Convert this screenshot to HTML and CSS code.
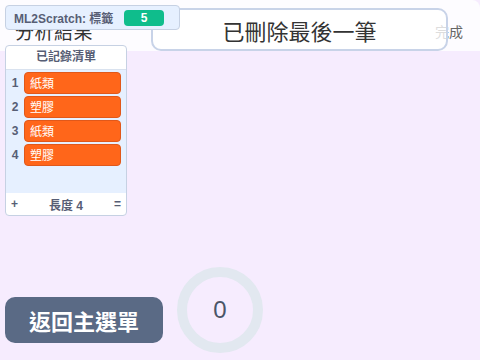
FILE: index.html
```html
<!DOCTYPE html>
<html lang="zh-Hant">
<head>
    <meta charset="UTF-8">
    <title>分析結果</title>
    <link rel="stylesheet" href="styles.css">
</head>
<body>
    <div class="stage">
        <div class="top-band"></div>
        <div class="title">分析結果</div>
        <div class="done">完成</div>
        <div class="message">已刪除最後一筆</div>

        <div class="var-monitor">
            <span class="var-label">ML2Scratch: 標籤</span>
            <span class="var-value">5</span>
        </div>

        <div class="list-monitor">
            <div class="list-header">已記錄清單</div>
            <div class="list-body">
                <div class="list-row"><span class="list-index">1</span><span class="list-item">紙類</span></div>
                <div class="list-row"><span class="list-index">2</span><span class="list-item">塑膠</span></div>
                <div class="list-row"><span class="list-index">3</span><span class="list-item">紙類</span></div>
                <div class="list-row"><span class="list-index">4</span><span class="list-item">塑膠</span></div>
            </div>
            <div class="list-footer">
                <span>+</span>
                <span class="list-length">長度 4</span>
                <span>=</span>
            </div>
        </div>

        <button class="back-btn">返回主選單</button>
        <div class="counter">0</div>
    </div>
</body>
</html>
```

FILE: styles.css
```css
body {
    margin: 0;
    font-family: "Liberation Sans", "Noto Sans CJK TC", sans-serif;
}
.stage {
    position: relative;
    width: 480px;
    height: 360px;
    overflow: hidden;
    background-color: #f6ecfe;
}
.top-band {
    height: 51px;
    background-color: #fdfcff;
    border-top-right-radius: 8px;
}
.title {
    position: absolute;
    left: 15px;
    top: 17px;
    font-size: 19px;
    color: #333;
    letter-spacing: 0.5px;
}
.done {
    position: absolute;
    left: 435px;
    top: 21px;
    font-size: 14px;
    color: #666;
}
.message {
    position: absolute;
    left: 151px;
    top: 8px;
    width: 293px;
    height: 39px;
    border: 2px solid #c8d3e8;
    border-radius: 10px;
    background-color: rgba(255, 255, 255, 0.78);
    display: flex;
    align-items: center;
    justify-content: center;
    font-size: 22px;
    color: #333;
}
.var-monitor {
    position: absolute;
    left: 5px;
    top: 5px;
    width: 165px;
    height: 23px;
    background-color: #e6f0ff;
    border: 1px solid #c6d1e3;
    border-radius: 4px;
    display: flex;
    align-items: center;
    padding-left: 8px;
    box-sizing: content-box;
}
.var-label {
    font-size: 12px;
    font-weight: bold;
    color: #575e75;
    width: 110px;
}
.var-value {
    width: 40px;
    height: 16px;
    line-height: 16px;
    background-color: #0fbd8c;
    color: white;
    border-radius: 4px;
    text-align: center;
    font-size: 12px;
    font-weight: bold;
}
.list-monitor {
    position: absolute;
    left: 5px;
    top: 45px;
    width: 120px;
    height: 169px;
    border: 1px solid #c6d1e3;
    border-radius: 4px;
    background-color: white;
    display: flex;
    flex-direction: column;
    overflow: hidden;
}
.list-header {
    height: 23px;
    line-height: 23px;
    border-bottom: 1px solid #d9e2ef;
    text-align: center;
    font-size: 12px;
    font-weight: bold;
    color: #575e75;
}
.list-body {
    flex: 1;
    background-color: #e6f0ff;
    padding-top: 1px;
}
.list-row {
    display: flex;
    align-items: center;
    height: 24px;
}
.list-index {
    width: 18px;
    text-align: center;
    font-size: 12px;
    font-weight: bold;
    color: #575e75;
}
.list-item {
    width: 97px;
    height: 22px;
    line-height: 22px;
    background-color: #ff661a;
    border: 1px solid #e0581a;
    border-radius: 4px;
    color: white;
    font-size: 12px;
    padding-left: 5px;
    box-sizing: border-box;
}
.list-footer {
    height: 22px;
    display: flex;
    align-items: center;
    justify-content: space-between;
    padding: 0 5px;
    font-size: 12px;
    font-weight: bold;
    color: #575e75;
}
.back-btn {
    position: absolute;
    left: 5px;
    top: 297px;
    width: 158px;
    height: 46px;
    border: none;
    border-radius: 10px;
    background-color: #5a6a85;
    color: white;
    font-family: "Liberation Sans", "Noto Sans CJK TC", sans-serif;
    font-size: 22px;
    font-weight: bold;
}
.counter {
    position: absolute;
    left: 177px;
    top: 267px;
    width: 66px;
    height: 66px;
    border: 10px solid #e2e8f0;
    border-radius: 50%;
    display: flex;
    align-items: center;
    justify-content: center;
    font-size: 24px;
    color: #4a5568;
}
```
